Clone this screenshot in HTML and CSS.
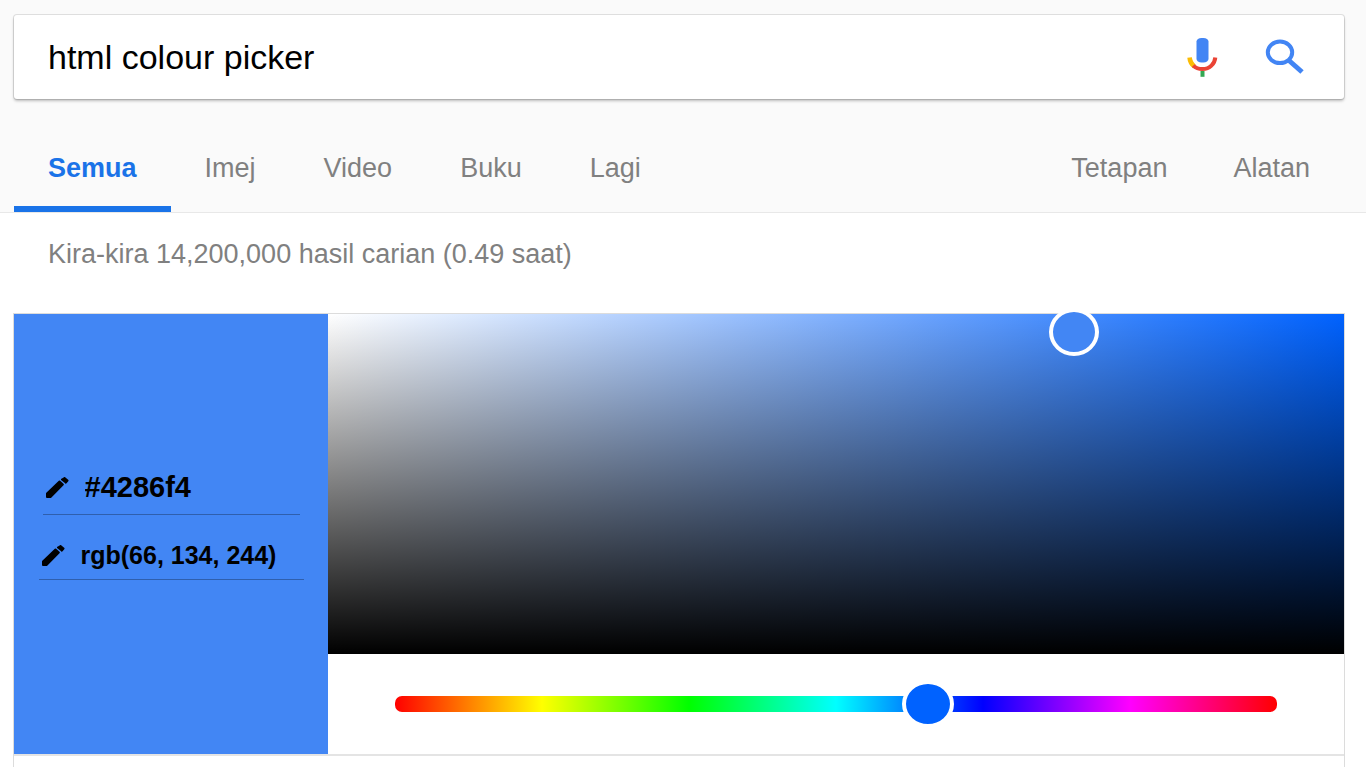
FILE: index.html
```
<!DOCTYPE html>
<html lang="ms">
<head>
    <meta charset="UTF-8">
    <meta name="viewport" content="width=device-width, initial-scale=1.0">
    <title>html colour picker</title>
    <link rel="stylesheet" href="styles.css">
</head>
<body>

    <header class="header">
        <form class="search" role="search">
            <input class="search-input" type="text" value="html colour picker" aria-label="Cari">
            <button class="icon-btn" type="button" aria-label="Cari dengan suara">
                <svg width="32" height="42" viewBox="0 -2 32 42" fill="none">
                    <rect x="10.5" y="0" width="12" height="24.5" rx="5" ry="3.5" fill="#4285f4"/>
                    <path d="M3.6 19.500C3.900 23.500 5.600 26.300 8.400 28.500" stroke="#fbbc05" stroke-width="4.600"/>
                    <path d="M7.200 27.600C12 32.200 20.800 32.200 25.400 27.600C27.800 25.400 29 22.900 29.300 19.500" stroke="#ea4335" stroke-width="4"/>
                    <path d="M16.500 33V38.800" stroke="#34a853" stroke-width="4"/>
                </svg>
            </button>
            <button class="icon-btn" type="submit" aria-label="Cari">
                <svg width="42" height="38" viewBox="0 0 42 38" fill="none" stroke="#4285f4">
                    <ellipse cx="16" cy="14.3" rx="12.200" ry="10.800" stroke-width="4"/>
                    <path d="M25 22.500L38 34" stroke-width="5"/>
                </svg>
            </button>
        </form>

        <nav class="tabs">
            <a class="tab active" href="#">Semua</a>
            <a class="tab" href="#">Imej</a>
            <a class="tab" href="#">Video</a>
            <a class="tab" href="#">Buku</a>
            <a class="tab" href="#">Lagi</a>
            <a class="tab tools" href="#">Tetapan</a>
            <a class="tab" href="#">Alatan</a>
        </nav>
    </header>

    <main class="results">
        <p class="stats">Kira-kira 14,200,000 hasil carian (0.49 saat)</p>

        <div class="card">
            <div class="picker">
                <div class="swatch">
                    <label class="field hex">
                        <svg class="pencil" viewBox="0 0 23 21">
                            <path d="M1 20V16.500L13.500 4.500L16.800 7.500L4.500 20zM16 2.500L18.500 1L21.500 3.500L19.800 5.600z"/>
                        </svg>
                        <input type="text" value="#4286f4" aria-label="Hex">
                    </label>
                    <label class="field rgb">
                        <svg class="pencil" viewBox="0 0 23 21">
                            <path d="M1 20V16.500L13.500 4.500L16.800 7.500L4.500 20zM16 2.500L18.500 1L21.500 3.500L19.800 5.600z"/>
                        </svg>
                        <input type="text" value="rgb(66, 134, 244)" aria-label="RGB">
                    </label>
                </div>

                <div class="controls">
                    <div class="shades">
                        <button class="shade-handle" type="button" aria-label="Warna"></button>
                    </div>
                    <div class="hue">
                        <input type="range" min="0" max="360" value="220" aria-label="Hue">
                    </div>
                </div>
            </div>
        </div>
    </main>

</body>
</html>
```

FILE: styles.css
```
* {
    box-sizing: border-box;
    margin: 0;
    padding: 0;
}
body {
    font-family: "Liberation Sans", Arial, sans-serif;
    font-size: 27px;
    color: #808080;
    background-color: white;
    display: flex;
    flex-direction: column;
    min-height: 100vh;
}
input, button {
    font-family: inherit;
    border: none;
    outline: none;
    background: none;
}
button {
    cursor: pointer;
}
svg {
    display: block;
}

/* header */
.header {
    background-color: #fafafa;
    border-bottom: 1px solid #e8e8e8;
    padding: 15px 22px 0 14px;
}
.search {
    display: flex;
    align-items: center;
    gap: 46px;
    height: 84px;
    padding: 0 38px 0 34px;
    background-color: white;
    border-radius: 3px;
    box-shadow: 0 2px 3px rgba(0, 0, 0, 0.25), 0 0 0 1px rgba(0, 0, 0, 0.1);
}
.search-input {
    flex: 1;
    min-width: 0;
    font-size: 34px;
    color: black;
}
.icon-btn {
    flex: none;
}
.tabs {
    display: flex;
    margin-top: 24px;
}
.tab {
    height: 89px;
    line-height: 90px;
    padding: 0 34px;
    color: #808080;
    text-decoration: none;
}
.tab.active {
    color: #1a73e8;
    font-weight: bold;
    border-bottom: 6px solid #1a73e8;
}
.tools {
    margin-left: auto;
    padding-right: 32px;
}

/* results */
.results {
    flex: 1;
    display: flex;
    flex-direction: column;
    padding: 0 21px 0 13px;
}
.stats {
    line-height: 32px;
    padding: 25px 35px 43px;
}
.card {
    flex: 1;
    border: 1px solid #dcdcdc;
    border-bottom: none;
}
.picker {
    display: grid;
    grid-template-columns: 314px 1fr;
    border-bottom: 2px solid #e4e4e4;
}

/* colour values */
.swatch {
    display: flex;
    flex-direction: column;
    align-items: center;
    gap: 25px;
    padding-top: 158px;
    background-color: #4286f4;
}
.field {
    display: flex;
    align-items: center;
    gap: 16px;
    padding-left: 3px;
    border-bottom: 1px solid #2f5fad;
}
.field input {
    flex: 1;
    min-width: 0;
    height: 30px;
    font-weight: bold;
    color: black;
}
.hex {
    width: 257px;
    padding-bottom: 12px;
}
.hex input {
    font-size: 29px;
}
.rgb {
    width: 265px;
    padding-bottom: 9px;
}
.rgb input {
    font-size: 25px;
}
.pencil {
    width: 23px;
    height: 21px;
    stroke: black;
    stroke-width: 2;
    stroke-linejoin: round;
}

/* shade area and hue slider */
.shades {
    position: relative;
    height: 340px;
    background: linear-gradient(to top, black, transparent), linear-gradient(to right, white, #0062ff);
}
.shade-handle {
    position: absolute;
    left: 73.4%;
    top: 5.3%;
    width: 50px;
    height: 48px;
    transform: translate(-50%, -50%);
    border: 4px solid white;
    border-radius: 50%;
    background-color: #4286f4;
}
.hue {
    display: flex;
    align-items: center;
    height: 100px;
    padding: 0 67px;
}
.hue input {
    -webkit-appearance: none;
    appearance: none;
    width: 100%;
    height: 16px;
    border-radius: 7px;
    background: linear-gradient(to right, #f00, #ff0, #0f0, #0ff, #00f, #f0f, #f00);
}
.hue input::-webkit-slider-thumb {
    -webkit-appearance: none;
    width: 52px;
    height: 48px;
    border: 4px solid white;
    border-radius: 50%;
    background-color: #0062ff;
}
```
